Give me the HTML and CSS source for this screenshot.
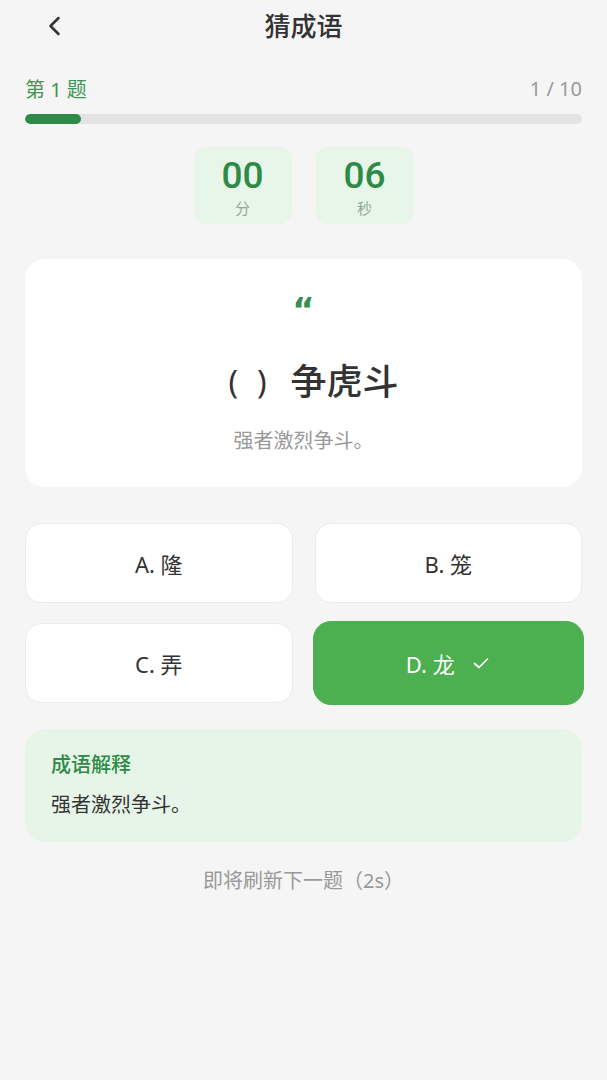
FILE: index.html
```html
<!DOCTYPE html>
<html lang="zh-CN">
<head>
    <meta charset="UTF-8">
    <meta name="viewport" content="width=device-width, initial-scale=1.0">
    <title>猜成语</title>
    <link rel="stylesheet" href="styles.css">
</head>
<body>
    <div class="header">
        <span class="back">
            <svg width="22" height="22" viewBox="0 0 22 22"><path d="M14.5 3 L6.5 11 L14.5 19" fill="none" stroke="#333" stroke-width="2.5" stroke-linecap="round" stroke-linejoin="round"/></svg>
        </span>
        <h1>猜成语</h1>
    </div>

    <div class="container">
        <div class="progress-row">
            <span class="question-no">第 1 题</span>
            <span class="question-count">1 / 10</span>
        </div>
        <div class="progress">
            <div class="progress-fill" style="width: 10%;"></div>
        </div>

        <div class="timer">
            <div class="timer-box">
                <div class="timer-num">00</div>
                <div class="timer-unit">分</div>
            </div>
            <div class="timer-box">
                <div class="timer-num">06</div>
                <div class="timer-unit">秒</div>
            </div>
        </div>

        <div class="question-card">
            <div class="quote">&ldquo;</div>
            <div class="idiom"><span class="blank">(</span><span class="blank wide">)</span>争虎斗</div>
            <div class="hint">强者激烈争斗。</div>
        </div>

        <div class="options">
            <button class="option">A. 隆</button>
            <button class="option">B. 笼</button>
            <button class="option">C. 弄</button>
            <button class="option correct">D. 龙
                <svg width="20" height="20" viewBox="0 0 20 20"><path d="M3.5 10.5 L8 14.5 L16.5 6" fill="none" stroke="#fff" stroke-width="1.7" stroke-linecap="round" stroke-linejoin="round"/></svg>
            </button>
        </div>

        <div class="explain">
            <div class="explain-title">成语解释</div>
            <div class="explain-text">强者激烈争斗。</div>
        </div>

        <p class="next-tip">即将刷新下一题（2s）</p>
    </div>
</body>
</html>
```

FILE: styles.css
```css
body {
    margin: 0;
    padding: 0;
    background-color: #f5f5f5;
    font-family: "Noto Sans", "Noto Sans CJK SC", sans-serif;
    color: #333;
}
.header {
    height: 52px;
    display: flex;
    align-items: center;
    justify-content: center;
    position: relative;
}
.back {
    position: absolute;
    left: 44px;
    top: 15px;
    width: 22px;
    height: 22px;
}
h1 {
    margin: 0;
    font-size: 26px;
    font-weight: 500;
    line-height: 36px;
    color: #333;
}
.container {
    padding: 0 25px;
}
.progress-row {
    display: flex;
    justify-content: space-between;
    align-items: center;
    margin-top: 22px;
    height: 28px;
}
.question-no {
    color: #3f9552;
    font-size: 20px;
}
.question-count {
    color: #9a9a9a;
    font-size: 20px;
}
.progress {
    margin-top: 12px;
    height: 10px;
    background: #e3e3e3;
    border-radius: 5px;
    overflow: hidden;
}
.progress-fill {
    height: 100%;
    background: #2e8b47;
    border-radius: 5px;
}
.timer {
    display: flex;
    justify-content: center;
    gap: 24px;
    margin-top: 23px;
}
.timer-box {
    width: 98px;
    height: 77px;
    background: #e7f6e9;
    border-radius: 12px;
    display: flex;
    flex-direction: column;
    align-items: center;
    padding-top: 10px;
    box-sizing: border-box;
}
.timer-num {
    color: #2e8b47;
    font-family: Roboto, "Noto Sans", sans-serif;
    font-size: 37px;
    font-weight: 500;
    line-height: 38px;
    height: 38px;
}
.timer-unit {
    margin-top: 3px;
    color: #8fa893;
    font-size: 15px;
    line-height: 20px;
}
.question-card {
    margin-top: 35px;
    background: #fff;
    border-radius: 20px;
    height: 228px;
    display: flex;
    flex-direction: column;
    align-items: center;
    box-sizing: border-box;
    padding-top: 36px;
}
.quote {
    color: #3a8f4f;
    font-size: 34px;
    font-weight: 700;
    line-height: 30px;
    height: 30px;
    font-family: "DejaVu Sans", sans-serif;
}
.idiom {
    margin-top: 33px;
    padding-left: 20px;
    font-size: 36px;
    font-weight: 500;
    line-height: 48px;
    color: #333;
    display: flex;
    align-items: center;
}
.blank {
    font-size: 32px;
    font-weight: 400;
    margin-right: 19px;
}
.blank.wide {
    margin-right: 24px;
}
.hint {
    margin-top: 21px;
    font-size: 20px;
    color: #999;
    line-height: 28px;
}
.option, .explain, .next-tip {
    font-family: "Noto Sans", "Noto Sans CJK SC", sans-serif;
}
.options {
    display: grid;
    grid-template-columns: 1fr 1fr;
    gap: 20px 22px;
    margin-top: 36px;
}
.option {
    height: 80px;
    background: #fff;
    border: 1.5px solid #ececec;
    border-radius: 16px;
    font-size: 22px;
    color: #333;
    display: flex;
    align-items: center;
    justify-content: center;
    gap: 6px;
    padding: 0;
}
.option.correct {
    background: #4caf50;
    border-color: #4caf50;
    color: #fff;
    margin: -2px -2px;
    height: 84px;
    border-radius: 18px;
    gap: 16px;
}
.explain {
    margin-top: 26px;
    background: #e7f5e8;
    border-radius: 20px;
    padding: 22px 26px 24px;
    box-sizing: border-box;
    height: 113px;
}
.explain-title {
    color: #2e8b47;
    font-size: 20px;
    font-weight: 500;
    line-height: 28px;
}
.explain-text {
    margin-top: 12px;
    font-size: 20px;
    color: #333;
    line-height: 28px;
}
.next-tip {
    text-align: center;
    color: #999;
    font-size: 20px;
    line-height: 28px;
    margin-top: 25px;
}
```
